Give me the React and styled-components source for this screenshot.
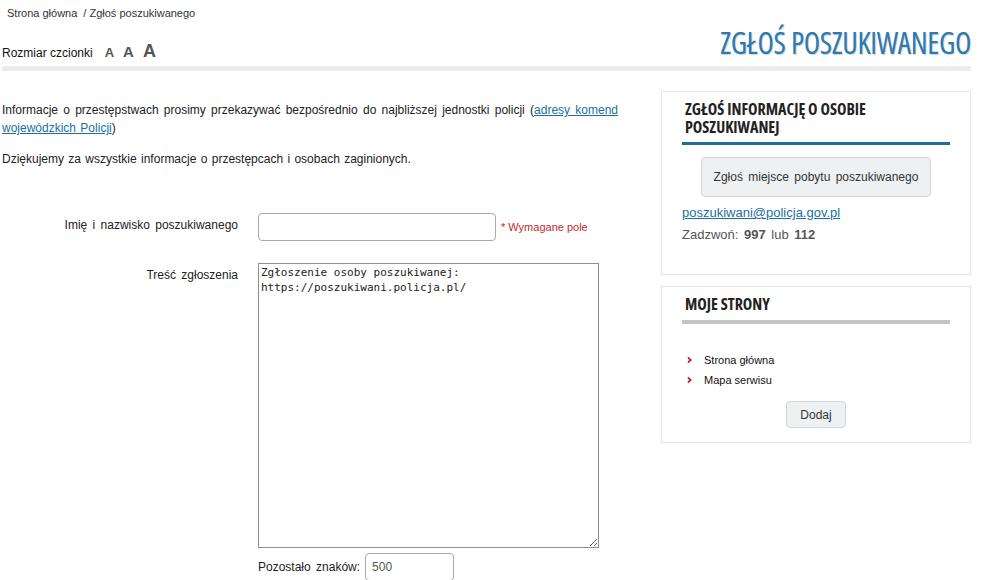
import React from "react";
import styled, { createGlobalStyle } from "styled-components";

const Global = createGlobalStyle`
  html, body { margin: 0; padding: 0; background: #fff; }
  body { font-family: "Liberation Sans", Arial, sans-serif; color: #222; }
  * { box-sizing: border-box; }
`;

const Page = styled.div`
  width: 991px;
  padding: 0 20px 0 2px;
`;

const Breadcrumb = styled.div`
  display: flex;
  gap: 6px;
  padding: 6px 0 0 5px;
  height: 20px;
  font-size: 11px;
  line-height: 14px;
  color: #333;
`;

const Crumb = styled.span`
  color: #333;
`;

const HeadRow = styled.div`
  display: flex;
  justify-content: space-between;
  align-items: flex-end;
  height: 46px;
  padding-bottom: 4px;
`;

const FontSizer = styled.div`
  display: flex;
  align-items: baseline;
  gap: 9px;
  font-size: 12px;
  color: #111;
`;

const SizeBtn = styled.span`
  font-weight: bold;
  color: #555;
  font-size: ${(p) => p.$size}px;
  margin-left: ${(p) => (p.$first ? 3 : 0)}px;
`;

const Title = styled.h1`
  margin: 0 0 3px;
  font-family: "Open Sans", sans-serif;
  font-stretch: 75%;
  font-weight: normal;
  font-size: 30px;
  line-height: 32px;
  letter-spacing: -0.3px;
  color: #2a7ab3;
  text-shadow: 1px 1px 1px rgba(0, 0, 0, 0.18);
`;

const Rule = styled.div`
  height: 5px;
  background: #ececec;
`;

const Columns = styled.div`
  display: grid;
  grid-template-columns: 1fr 310px;
  gap: 21px;
  padding-top: 20px;
`;

const Main = styled.div`
  padding-right: 22px;
`;

const Para = styled.p`
  margin: 10px 0 13px;
  font-size: 12px;
  line-height: 18px;
  text-align: justify;
  color: #222;
  word-spacing: 1px;
`;

const Link = styled.a`
  color: #1c6ea4;
  text-decoration: underline;
`;

const Form = styled.div`
  display: grid;
  grid-template-columns: 236px auto;
  column-gap: 20px;
  row-gap: 22px;
  margin-top: 45px;
  align-items: start;
`;

const Label = styled.label`
  text-align: right;
  font-size: 12px;
  line-height: 14px;
  padding-top: ${(p) => p.$pt || 4}px;
  color: #222;
  word-spacing: 2px;
`;

const FieldRow = styled.div`
  display: flex;
  align-items: center;
  gap: 5px;
`;

const TextInput = styled.input`
  width: 238px;
  height: 28px;
  border: 1px solid #a9a9a9;
  border-radius: 4px;
  font-size: 12px;
  padding: 0 6px;
`;

const Required = styled.span`
  color: #c42a2a;
  font-size: 11px;
`;

const TextArea = styled.textarea`
  display: block;
  width: 341px;
  height: 285px;
  border: 1px solid #8f8f8f;
  border-radius: 0;
  font-family: "DejaVu Sans Mono", "Liberation Mono", monospace;
  font-size: 11px;
  line-height: 15px;
  padding: 1px 2px;
  color: #222;
  resize: both;
`;

const Counter = styled.div`
  display: flex;
  align-items: center;
  gap: 5px;
  margin-top: 5px;
  font-size: 12px;
  color: #222;
  word-spacing: 2px;
`;

const SmallInput = styled.input`
  width: 89px;
  height: 28px;
  border: 1px solid #a9a9a9;
  border-radius: 4px;
  font-size: 12px;
  color: #555;
  padding: 0 6px;
`;

const Side = styled.aside`
  display: flex;
  flex-direction: column;
  gap: 11px;
`;

const Box = styled.section`
  border: 1px solid #e6e6e6;
  padding: 8px 20px ${(p) => p.$pb || 14}px;
`;

const BoxTitle = styled.h2`
  margin: 0;
  padding: 0 0 ${(p) => p.$pb || 6}px 3px;
  border-bottom: ${(p) => p.$bw || 3}px solid ${(p) => p.$line};
  font-family: "Open Sans", sans-serif;
  font-stretch: 75%;
  font-weight: bold;
  font-size: 16px;
  line-height: 18px;
  color: #222;
`;

const Center = styled.div`
  display: flex;
  justify-content: center;
  margin-top: ${(p) => p.$mt || 0}px;
`;

const Button = styled.button`
  height: ${(p) => p.$h || 40}px;
  padding: 0 ${(p) => p.$px || 12}px;
  background: #eef0f2;
  border: 1px solid #d3d6d9;
  border-radius: 4px;
  font-family: "Liberation Sans", Arial, sans-serif;
  font-size: 12px;
  color: #333;
  word-spacing: 2px;
`;

const Email = styled(Link)`
  display: block;
  margin-top: 7px;
  font-size: 13px;
  line-height: 18px;
`;

const Phone = styled.div`
  margin-top: 4px;
  font-size: 13px;
  line-height: 18px;
  color: #555;
  word-spacing: 2px;
`;

const List = styled.ul`
  list-style: none;
  margin: 26px 0 0;
  padding: 0;
`;

const Item = styled.li`
  display: flex;
  align-items: center;
  gap: 11px;
  font-size: 11px;
  line-height: 20px;
  color: #111;
  padding-left: 5px;
`;

const Chevron = () => (
  <svg width="6" height="8" viewBox="0 0 6 8">
    <path d="M0.8 0.5 L5 4 L0.8 7.5 L0.8 5.2 L2.6 4 L0.8 2.8 Z" fill="#c0141b" />
  </svg>
);

export default function App() {
  return (
    <Page>
      <Global />
      <Breadcrumb>
        <Crumb>Strona główna</Crumb>
        <Crumb>/ Zgłoś poszukiwanego</Crumb>
      </Breadcrumb>
      <HeadRow>
        <FontSizer>
          Rozmiar czcionki
          <SizeBtn $size={13} $first>A</SizeBtn>
          <SizeBtn $size={15}>A</SizeBtn>
          <SizeBtn $size={18}>A</SizeBtn>
        </FontSizer>
        <Title>ZGŁOŚ POSZUKIWANEGO</Title>
      </HeadRow>
      <Rule />
      <Columns>
        <Main>
          <Para>
            Informacje o przestępstwach prosimy przekazywać bezpośrednio do najbliższej jednostki policji{" "}
            <span>
              (<Link href="#">adresy komend wojewódzkich Policji</Link>)
            </span>
          </Para>
          <Para>Dziękujemy za wszystkie informacje o przestępcach i osobach zaginionych.</Para>
          <Form>
            <Label $pt={5}>Imię i nazwisko poszukiwanego</Label>
            <FieldRow>
              <TextInput type="text" />
              <Required>* Wymagane pole</Required>
            </FieldRow>
            <Label $pt={5}>Treść zgłoszenia</Label>
            <div>
              <TextArea
                defaultValue={"Zgłoszenie osoby poszukiwanej:\nhttps://poszukiwani.policja.pl/"}
              />
              <Counter>
                Pozostało znaków:
                <SmallInput type="text" defaultValue="500" />
              </Counter>
            </div>
          </Form>
        </Main>
        <Side>
          <Box $pb={30}>
            <BoxTitle $line="#1f6e99">ZGŁOŚ INFORMACJĘ O OSOBIE POSZUKIWANEJ</BoxTitle>
            <Center $mt={12}>
              <Button>Zgłoś miejsce pobytu poszukiwanego</Button>
            </Center>
            <Email href="#">poszukiwani@policja.gov.pl</Email>
            <Phone>
              Zadzwoń: <b>997</b> lub <b>112</b>
            </Phone>
          </Box>
          <Box>
            <BoxTitle $line="#c4c4c4" $bw={4} $pb={7}>MOJE STRONY</BoxTitle>
            <List>
              <Item><Chevron />Strona główna</Item>
              <Item><Chevron />Mapa serwisu</Item>
            </List>
            <Center $mt={11}>
              <Button $h={27} $px={13}>Dodaj</Button>
            </Center>
          </Box>
        </Side>
      </Columns>
    </Page>
  );
}
